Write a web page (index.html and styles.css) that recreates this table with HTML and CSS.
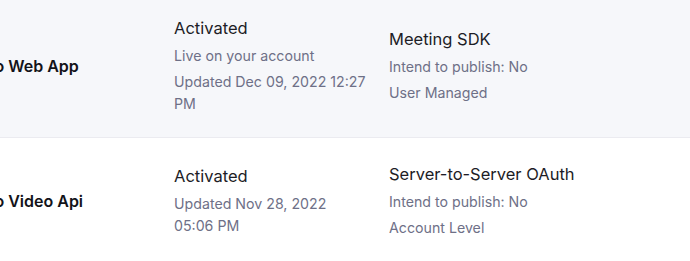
FILE: index.html
```html
<!DOCTYPE html>
<html lang="en">
<head>
    <meta charset="UTF-8">
    <meta name="viewport" content="width=device-width, initial-scale=1.0">
    <title>Apps</title>
    <link rel="stylesheet" href="styles.css">
</head>
<body>
    <div class="app-list">
        <div class="app-row active">
            <div class="app-name">Demo Web App</div>
            <div class="app-cell">
                <div class="cell-title">Activated</div>
                <div class="cell-sub">Live on your account</div>
                <div class="cell-sub">Updated Dec 09, 2022 12:27 PM</div>
            </div>
            <div class="app-cell">
                <div class="cell-title">Meeting SDK</div>
                <div class="cell-sub">Intend to publish: No</div>
                <div class="cell-sub">User Managed</div>
            </div>
        </div>

        <div class="app-row">
            <div class="app-name">Demo Video Api</div>
            <div class="app-cell">
                <div class="cell-title">Activated</div>
                <div class="cell-sub">Updated Nov 28, 2022 05:06 PM</div>
            </div>
            <div class="app-cell">
                <div class="cell-title">Server-to-Server OAuth</div>
                <div class="cell-sub">Intend to publish: No</div>
                <div class="cell-sub">Account Level</div>
            </div>
        </div>
    </div>
</body>
</html>
```

FILE: styles.css
```css
body {
    margin: 0;
    font-family: Inter, 'Noto Sans', sans-serif;
    background: #ffffff;
    overflow: hidden;
}
.app-list {
    margin: -8px 0 0 -41px;
}
.app-row {
    display: grid;
    grid-template-columns: 215px 215px 1fr;
    align-items: center;
    padding: 24px 0;
    border-bottom: 1px solid #ebebf0;
    background: #ffffff;
}
.app-row.active {
    padding-bottom: 22px;
    background: #f6f7fa;
}
.app-name {
    font-size: 16px;
    font-weight: 600;
    color: #131319;
    white-space: nowrap;
}
.app-cell {
    padding-right: 21px;
}
.cell-title {
    font-size: 16.5px;
    line-height: 25px;
    color: #1d1d26;
}
.cell-sub {
    margin-top: 4px;
    font-size: 14.2px;
    line-height: 22px;
    color: #6e7087;
}
```
